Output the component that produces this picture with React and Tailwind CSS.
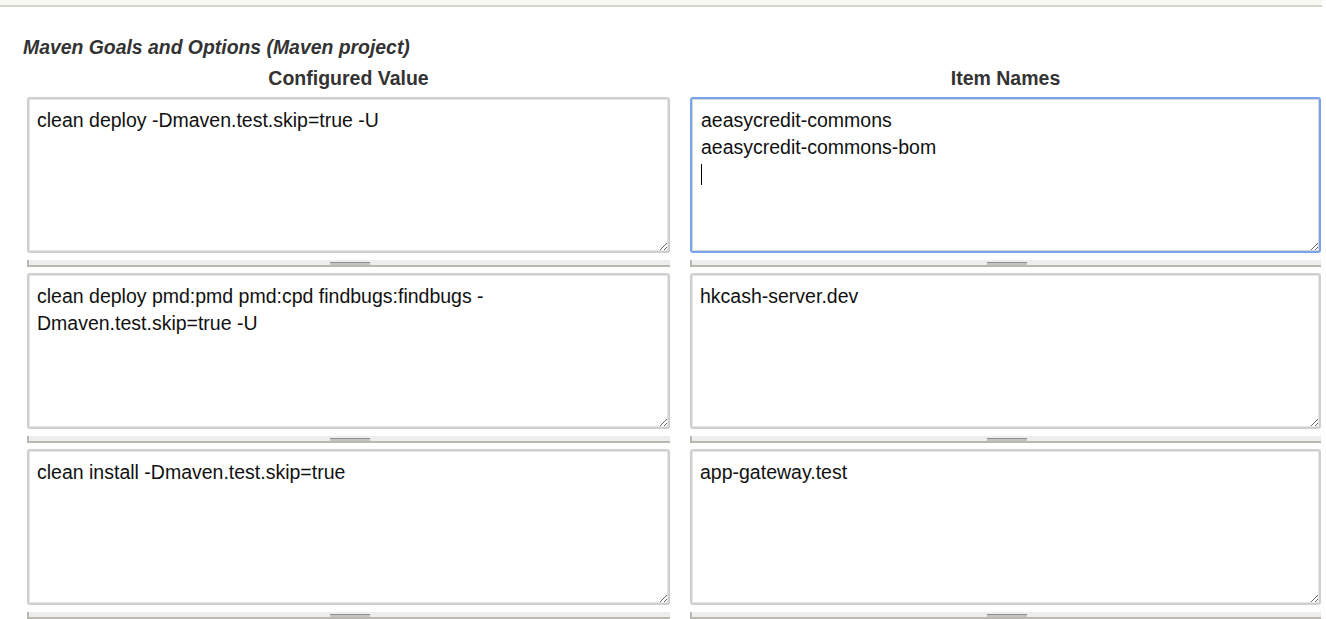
import React from "react";

const rows = [
  ["clean deploy -Dmaven.test.skip=true -U", "aeasycredit-commons\naeasycredit-commons-bom\n"],
  ["clean deploy pmd:pmd pmd:cpd findbugs:findbugs -\nDmaven.test.skip=true -U", "hkcash-server.dev"],
  ["clean install -Dmaven.test.skip=true", "app-gateway.test"],
];

function Grip() {
  return (
    <div className="relative h-[7px] bg-[#ededed] border-l-2 border-b-2 border-[#b9b9b1] flex justify-center">
      <div className="w-10 h-[3px] mt-[2px] bg-[#c4c4c4] border-t border-[#8f8f8f]" />
    </div>
  );
}

function Area({ value, focused, caret }) {
  return (
    <div className="flex flex-col">
      <div className="relative">
        <textarea
          readOnly
          value={value}
          className={
            "block w-full h-[156px] rounded-[3px] pt-[8px] text-[19.5px] leading-[27px] text-[#111] bg-white outline-none overflow-hidden " +
            (focused
              ? "border-2 border-[#78a4ee] shadow-[inset_0_0_0_1px_#d6d6d6] pl-[9px] pr-[8px]"
              : "border-2 border-[#cfcfcf] shadow-[inset_0_0_0_1px_#e6e6e6] px-[8px]")
          }
          style={{ fontFamily: '"Liberation Sans", Arial, sans-serif', resize: "vertical" }}
        />
        {caret && <div className="absolute left-[11px] w-px h-[21px] bg-black" style={{ top: 67 }} />}
      </div>
      <div className="mt-[7px]">
        <Grip />
      </div>
    </div>
  );
}

export default function App() {
  return (
    <div className="w-[1326px] h-[619px] bg-white overflow-hidden" style={{ fontFamily: '"Liberation Sans", Arial, sans-serif' }}>
      <div className="w-[1322px] h-[7px] bg-[#f6f8f1] border-b-2 border-[#d6d6ce]" />
      <div className="pl-[23px] pt-[30px] text-[19.4px] leading-[20px] font-bold italic text-[#333]">
        Maven Goals and Options (Maven project)
      </div>
      <div className="pl-[27px] grid grid-cols-[643px_631px] gap-x-[20px]">
        <div className="text-center text-[19.5px] leading-[20px] font-bold text-[#333] pt-[11px] pb-[9px]">Configured Value</div>
        <div className="text-center text-[19.5px] leading-[20px] font-bold text-[#333] pt-[11px] pb-[9px]">Item Names</div>
        {rows.map(([a, b], i) => (
          <React.Fragment key={i}>
            <div className="mb-[6px]"><Area value={a} /></div>
            <div className="mb-[6px]"><Area value={b} focused={i === 0} caret={i === 0} /></div>
          </React.Fragment>
        ))}
      </div>
    </div>
  );
}
